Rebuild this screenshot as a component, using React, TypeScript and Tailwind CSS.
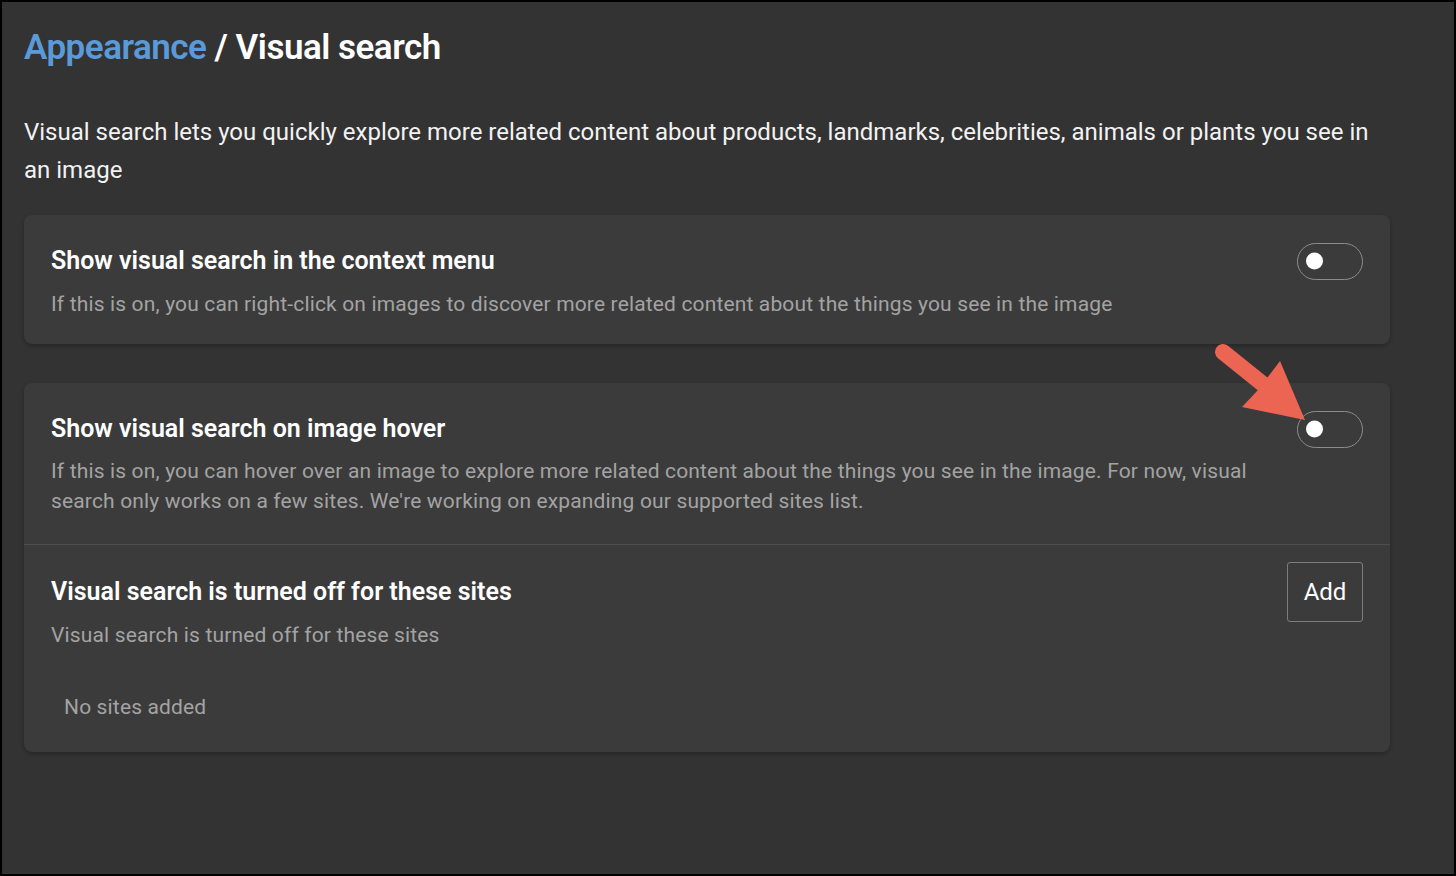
import React, { useState } from 'react';

const Toggle: React.FC<{ on: boolean; onChange: () => void }> = ({ on, onChange }) => (
  <button
    onClick={onChange}
    className={`relative w-[66px] h-[37px] rounded-full border-[1.5px] border-[#8c8c8c] shrink-0 ${on ? 'bg-[#4a90d9]' : 'bg-transparent'}`}
  >
    <span
      className={`absolute top-1/2 -translate-y-1/2 w-[17px] h-[17px] rounded-full bg-white ${on ? 'right-[8px]' : 'left-[8px]'}`}
    />
  </button>
);

const Arrow = () => (
  <svg className="absolute left-[1208px] top-[336px] pointer-events-none" width="110" height="92" viewBox="1208 336 110 92">
    <line x1="1221" y1="350" x2="1262" y2="383" stroke="#ec6452" strokeWidth="16" strokeLinecap="round" />
    <polygon points="1303,418 1240,405 1256,388 1278,359" fill="#ec6452" />
  </svg>
);

export default function App() {
  const [contextMenu, setContextMenu] = useState(false);
  const [hover, setHover] = useState(false);

  return (
    <div
      className="relative w-[1456px] h-[876px] bg-[#333333] border-2 border-black text-white overflow-hidden"
      style={{ fontFamily: 'Roboto, "Noto Sans", sans-serif' }}
    >
      <div className="pl-[22px] pt-[24px] w-[1388px]">
        <h1 className="text-[35px] leading-[44px] font-semibold tracking-[-0.5px]">
          <span className="text-[#5b9ad8]">Appearance</span> / Visual search
        </h1>

        <p className="mt-[43px] text-[24px] leading-[38px] text-[#f2f2f2]">
          Visual search lets you quickly explore more related content about products, landmarks, celebrities, animals or plants you see in an image
        </p>

        {/* context menu card */}
        <div className="mt-[26px] bg-[#3b3b3b] rounded-[8px] shadow-[0_2px_4px_rgba(0,0,0,0.25)] px-[27px] pt-[30px] pb-[26px]">
          <div className="flex items-center justify-between h-[32px]">
            <h2 className="text-[25px] leading-[32px] font-semibold">Show visual search in the context menu</h2>
            <Toggle on={contextMenu} onChange={() => setContextMenu(!contextMenu)} />
          </div>
          <p className="mt-[13px] text-[21px] leading-[28px] text-[#a3a3a3] tracking-[0.15px]">
            If this is on, you can right-click on images to discover more related content about the things you see in the image
          </p>
        </div>

        {/* hover card */}
        <div className="mt-[39px] bg-[#3b3b3b] rounded-[8px] shadow-[0_2px_4px_rgba(0,0,0,0.25)]">
          <div className="px-[27px] pt-[30px] pb-[28px] border-b border-[#4e4e4e]">
            <div className="flex items-center justify-between h-[32px]">
              <h2 className="text-[25px] leading-[32px] font-semibold">Show visual search on image hover</h2>
              <Toggle on={hover} onChange={() => setHover(!hover)} />
            </div>
            <p className="mt-[11px] text-[21px] leading-[30px] text-[#a3a3a3] tracking-[0.15px] pr-[90px]">
              If this is on, you can hover over an image to explore more related content about the things you see in the image. For now, visual search only works on a few sites. We're working on expanding our supported sites list.
            </p>
          </div>

          <div className="px-[27px] pt-[31px] pb-[30px]">
            <div className="flex items-center justify-between h-[32px]">
              <h2 className="text-[25px] leading-[32px] font-semibold">Visual search is turned off for these sites</h2>
              <button className="w-[76px] h-[60px] shrink-0 border-[1.5px] border-[#7d7d7d] rounded-[3px] text-[24px] text-white">
                Add
              </button>
            </div>
            <p className="mt-[12px] text-[21px] leading-[30px] text-[#a3a3a3] tracking-[0.15px]">Visual search is turned off for these sites</p>
            <p className="mt-[42px] pl-[13px] text-[21px] leading-[30px] text-[#a3a3a3] tracking-[0.15px]">No sites added</p>
          </div>
        </div>
      </div>

      <Arrow />
    </div>
  );
}
